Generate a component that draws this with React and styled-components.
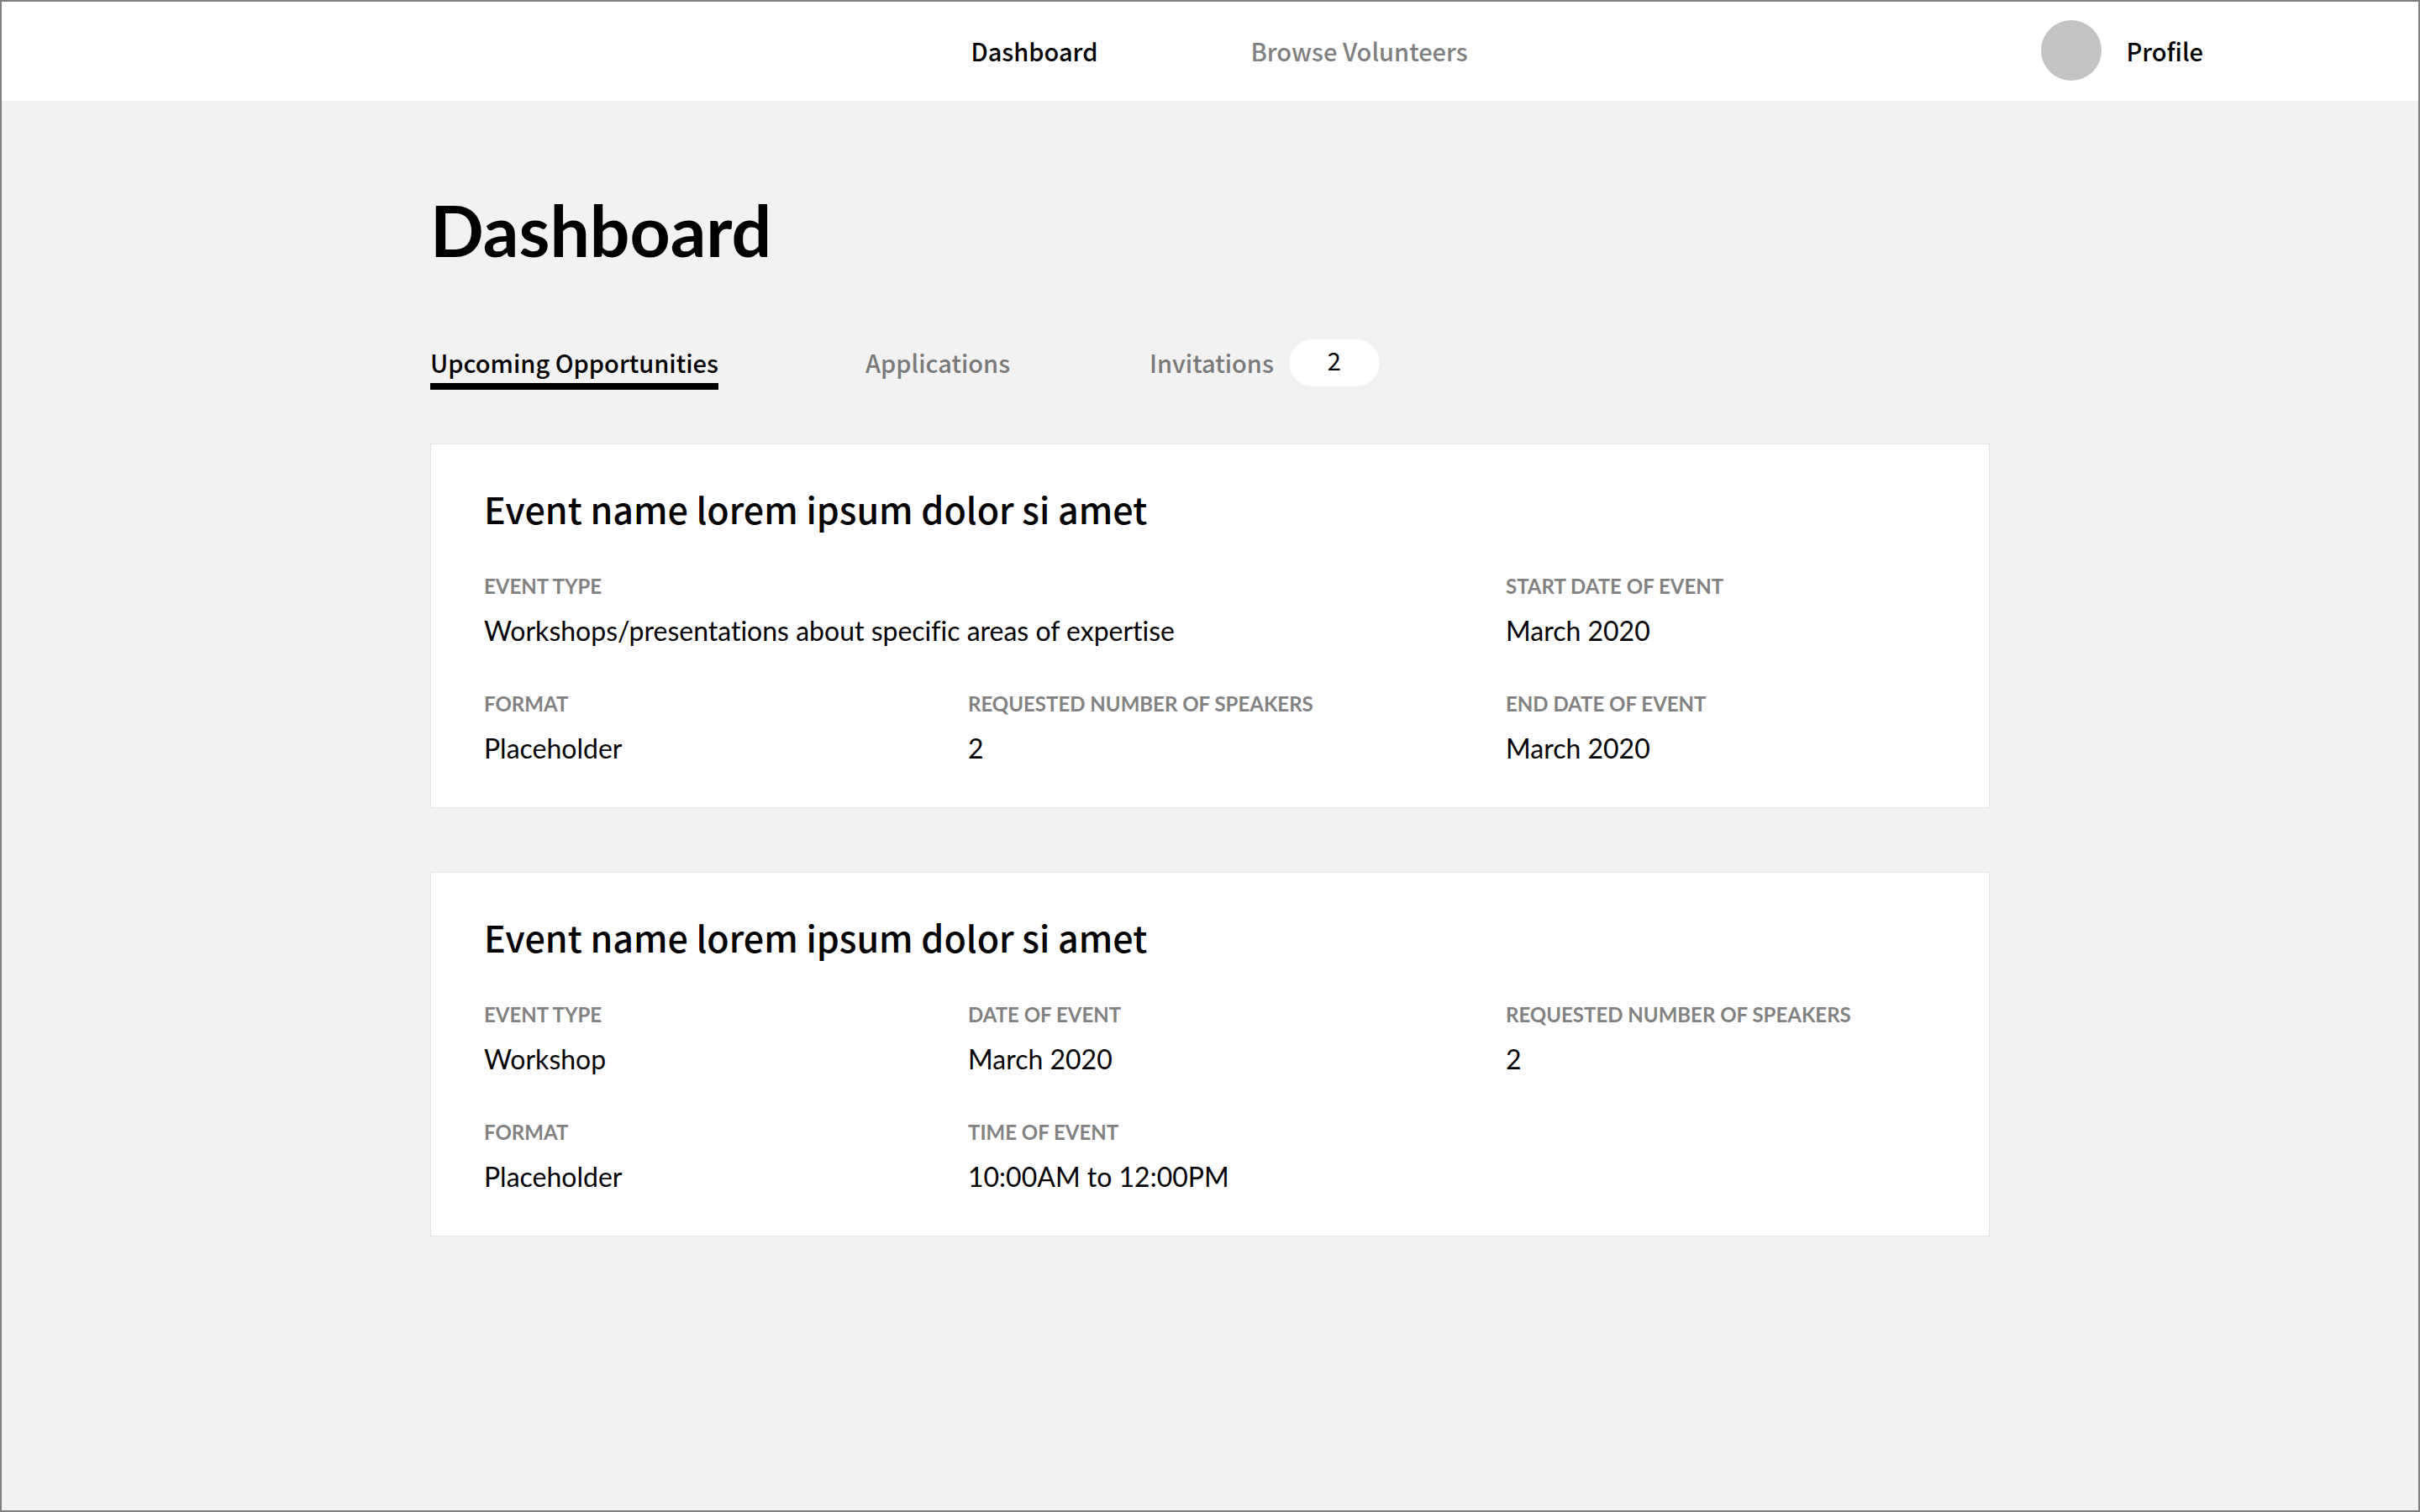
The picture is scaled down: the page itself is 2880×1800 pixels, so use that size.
import React, { useState } from "react";
import styled, { createGlobalStyle } from "styled-components";

const sourceSans = '"Noto Sans CJK JP", "Noto Sans", sans-serif';
const humanist = 'Lato, "Open Sans", sans-serif';

const GlobalStyle = createGlobalStyle`
  *, *::before, *::after {
    box-sizing: border-box;
  }

  body {
    margin: 0;
    background: #f2f2f2;
    color: #000;
    font-family: ${humanist};
    font-variant-ligatures: no-common-ligatures;
  }
`;

const Page = styled.div`
  min-height: 100vh;
  border: 2px solid #808080;
  background: #f2f2f2;
`;

const Header = styled.header`
  display: grid;
  grid-template-columns: 1fr auto 1fr;
  align-items: center;
  padding: 22px 256px 24px 278px;
  background: #fff;
`;

const Nav = styled.nav`
  grid-column: 2;
  display: flex;
  gap: 182px;
`;

const NavLink = styled.a`
  color: ${(p) => (p.$active ? "#000" : "#808080")};
  font: 500 29px/42px ${sourceSans};
  text-decoration: none;
`;

const ProfileLink = styled(NavLink)`
  display: flex;
  align-items: center;
  gap: 30px;
  justify-self: end;
`;

const Avatar = styled.span`
  width: 72px;
  height: 72px;
  border-radius: 50%;
  background: #c4c4c4;
`;

const Main = styled.main`
  max-width: 1856px;
  margin: 0 auto;
  padding: 104px 0 76px;
`;

const Title = styled.h1`
  margin: 0 0 86px;
  font: 700 84px/100px ${humanist};
`;

const Tabs = styled.div`
  display: grid;
  grid-template-columns: 518px 338px auto;
  justify-items: start;
  margin-bottom: 64px;
`;

const Tab = styled.button`
  display: flex;
  align-items: center;
  gap: 18px;
  padding: 0 0 4px;
  border: 0;
  border-bottom: 8px solid ${(p) => (p.$active ? "#000" : "transparent")};
  background: none;
  color: ${(p) => (p.$active ? "#000" : "#7a7a7a")};
  font: 500 29px/42px ${sourceSans};
  cursor: pointer;
`;

const Count = styled.span`
  width: 108px;
  height: 56px;
  margin: -6px 0 -8px;
  border-radius: 28px;
  background: #fff;
  color: #000;
  font-weight: 400;
  line-height: 48px;
  text-align: center;
`;

const CardList = styled.div`
  display: flex;
  flex-direction: column;
  gap: 76px;
`;

const Card = styled.article`
  padding: 44px 63px 47px;
  border: 1px solid #e5e5e5;
  background: #fff;
`;

const CardTitle = styled.h2`
  margin: 0 0 45px;
  font: 500 43px/64px ${sourceSans};
`;

const Details = styled.dl`
  display: grid;
  grid-template-columns: 9fr 10fr 8fr;
  row-gap: 48px;
  margin: 0;
`;

const Detail = styled.div`
  display: flex;
  flex-direction: column;
  gap: 14px;
  grid-column: span ${(p) => p.$span || 1};
`;

const Label = styled.dt`
  color: #828282;
  font-size: 24px;
  font-weight: 700;
  line-height: 32px;
  text-transform: uppercase;
`;

const Value = styled.dd`
  margin: 0;
  font-size: 32px;
  line-height: 46px;
`;

const tabs = [
  { name: "Upcoming Opportunities" },
  { name: "Applications" },
  { name: "Invitations", count: 2 },
];

const events = [
  {
    id: 1,
    name: "Event name lorem ipsum dolor si amet",
    details: [
      {
        label: "Event type",
        value: "Workshops/presentations about specific areas of expertise",
        span: 2,
      },
      { label: "Start date of event", value: "March 2020" },
      { label: "Format", value: "Placeholder" },
      { label: "Requested number of speakers", value: "2" },
      { label: "End date of event", value: "March 2020" },
    ],
  },
  {
    id: 2,
    name: "Event name lorem ipsum dolor si amet",
    details: [
      { label: "Event type", value: "Workshop" },
      { label: "Date of event", value: "March 2020" },
      { label: "Requested number of speakers", value: "2" },
      { label: "Format", value: "Placeholder" },
      { label: "Time of event", value: "10:00AM to 12:00PM" },
    ],
  },
];

export default function App() {
  const [activeTab, setActiveTab] = useState("Upcoming Opportunities");

  return (
    <Page>
      <GlobalStyle />
      <Header>
        <Nav>
          <NavLink href="#dashboard" $active aria-current="page">
            Dashboard
          </NavLink>
          <NavLink href="#volunteers">Browse Volunteers</NavLink>
        </Nav>
        <ProfileLink href="#profile" $active>
          <Avatar />
          Profile
        </ProfileLink>
      </Header>
      <Main>
        <Title>Dashboard</Title>
        <Tabs role="tablist">
          {tabs.map((tab) => (
            <Tab
              key={tab.name}
              type="button"
              role="tab"
              aria-selected={tab.name === activeTab}
              $active={tab.name === activeTab}
              onClick={() => setActiveTab(tab.name)}
            >
              {tab.name}
              {tab.count && <Count>{tab.count}</Count>}
            </Tab>
          ))}
        </Tabs>
        <CardList>
          {events.map((event) => (
            <Card key={event.id}>
              <CardTitle>{event.name}</CardTitle>
              <Details>
                {event.details.map((detail) => (
                  <Detail key={detail.label} $span={detail.span}>
                    <Label>{detail.label}</Label>
                    <Value>{detail.value}</Value>
                  </Detail>
                ))}
              </Details>
            </Card>
          ))}
        </CardList>
      </Main>
    </Page>
  );
}
